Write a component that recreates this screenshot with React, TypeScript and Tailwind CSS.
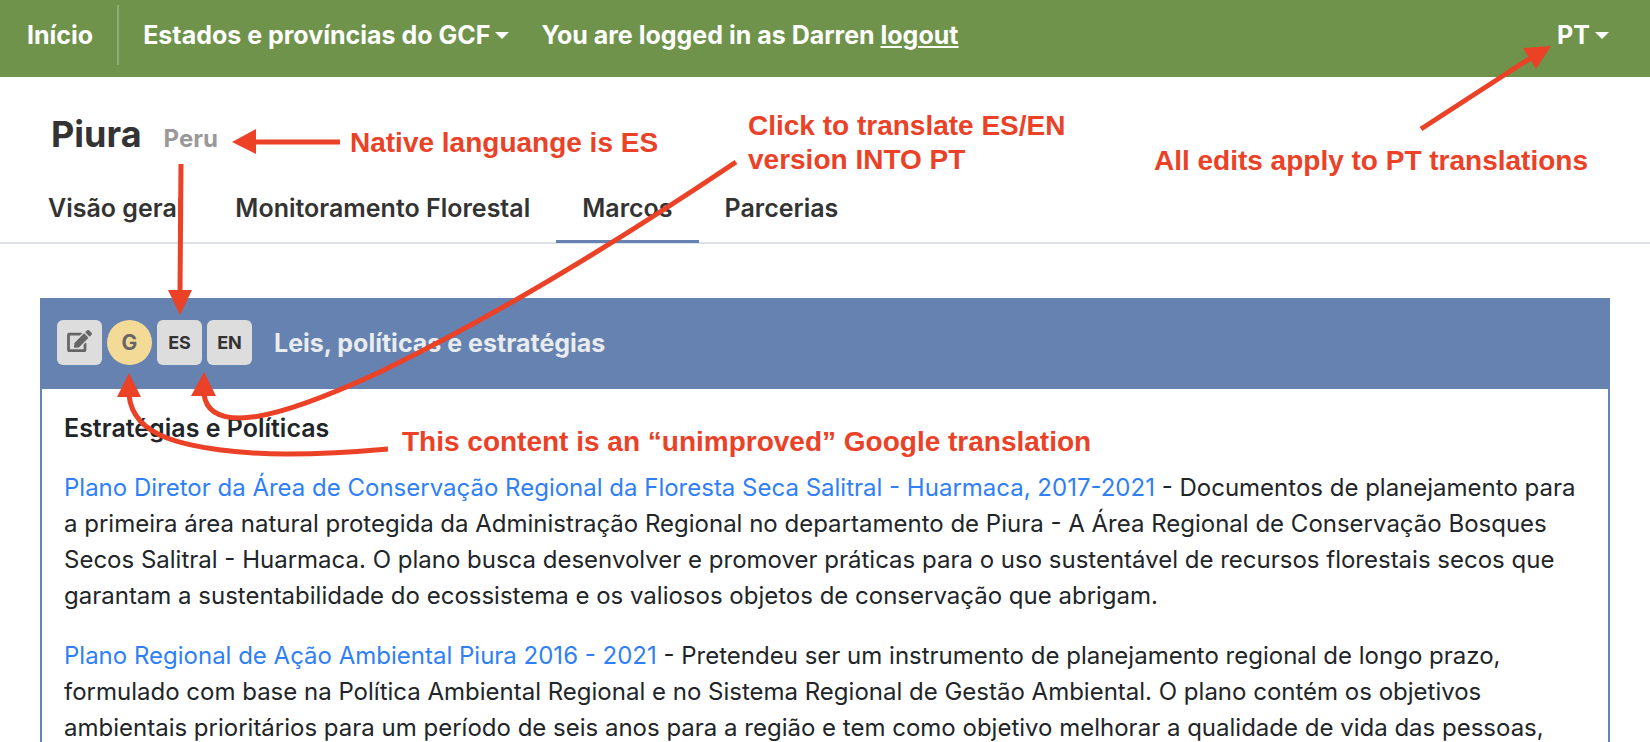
import type { ReactNode } from "react";
import { FaEdit } from "react-icons/fa";

const tabs = [
  { label: "Visão geral", active: false },
  { label: "Monitoramento Florestal", active: false },
  { label: "Marcos", active: true },
  { label: "Parcerias", active: false },
];

const policies = [
  {
    title: "Plano Diretor da Área de Conservação Regional da Floresta Seca Salitral - Huarmaca, 2017-2021",
    text: "Documentos de planejamento para a primeira área natural protegida da Administração Regional no departamento de Piura - A Área Regional de Conservação Bosques Secos Salitral - Huarmaca. O plano busca desenvolver e promover práticas para o uso sustentável de recursos florestais secos que garantam a sustentabilidade do ecossistema e os valiosos objetos de conservação que abrigam.",
  },
  {
    title: "Plano Regional de Ação Ambiental Piura 2016 - 2021",
    text: "Pretendeu ser um instrumento de planejamento regional de longo prazo, formulado com base na Política Ambiental Regional e no Sistema Regional de Gestão Ambiental. O plano contém os objetivos ambientais prioritários para um período de seis anos para a região e tem como objetivo melhorar a qualidade de vida das pessoas,",
  },
];

function Caret() {
  return (
    <svg className="h-[7px] w-[14px]" viewBox="0 0 14 7" fill="currentColor" aria-hidden="true">
      <path d="M0 0H14L7 7Z" />
    </svg>
  );
}

function TopBar() {
  return (
    <nav className="flex h-[77px] items-start bg-[#6f934b] pt-[5px] pr-[41px] text-[25px] leading-[60px] font-bold text-white">
      <a href="#inicio" className="border-r-2 border-[#8faa73] pr-6 pl-[27px]">
        Início
      </a>
      <button type="button" className="ml-6 flex items-center gap-[5px] font-bold">
        Estados e províncias do GCF
        <Caret />
      </button>
      <p className="ml-8">
        You are logged in as Darren{" "}
        <a href="#logout" className="underline decoration-2 underline-offset-2">
          logout
        </a>
      </p>
      <button type="button" className="ml-auto flex items-center gap-[5px] font-bold">
        PT
        <Caret />
      </button>
    </nav>
  );
}

function RegionHeader() {
  return (
    <header className="border-b-2 border-[#dee2e6] pt-[31px] text-[#333]">
      <div className="flex items-baseline gap-[22px] pl-[51px]">
        <h1 className="text-[36px] leading-[52px] font-bold">Piura</h1>
        <span className="text-[24px] font-bold text-[#999]">Peru</span>
      </div>
      <div className="-mb-px flex pt-[22px] pl-[22px]">
        {tabs.map((tab) => (
          <a
            key={tab.label}
            href={`#${tab.label}`}
            className={
              tab.active
                ? "border-b-[3px] border-[#6582b0] px-[26px] pt-2 pb-[14px] text-[25px] leading-9 font-semibold"
                : "border-b-[3px] border-transparent px-[26px] pt-2 pb-[14px] text-[25px] leading-9 font-semibold"
            }
          >
            {tab.label}
          </a>
        ))}
      </div>
    </header>
  );
}

function LanguageButton({ children }: { children: ReactNode }) {
  return (
    <button
      type="button"
      className="flex size-[45px] items-center justify-center rounded-[6px] bg-[#ddd] text-[18px] font-bold text-[#333]"
    >
      {children}
    </button>
  );
}

function PolicyPanel() {
  return (
    <section className="mx-10 mt-[54px] border-2 border-[#6582b0] text-[24px] leading-9">
      <div className="flex h-[89px] items-center gap-[5px] bg-[#6582b0] pb-1 pl-[15px]">
        <button
          type="button"
          aria-label="Editar"
          className="flex size-[45px] items-center justify-center rounded-[6px] bg-[#ddd] pb-1 text-[#666]"
        >
          <FaEdit className="h-[22px] w-[25px]" />
        </button>
        <span className="flex size-[45px] items-center justify-center rounded-full bg-[#f4da97] text-[21px] font-bold text-[#666]">
          G
        </span>
        <LanguageButton>ES</LanguageButton>
        <LanguageButton>EN</LanguageButton>
        <h2 className="ml-[17px] text-[25px] font-bold text-[#e9ecef]">Leis, políticas e estratégias</h2>
      </div>
      <div className="px-[22px] pt-[21px] pb-6 text-[#212529]">
        <h3 className="text-[25px] font-semibold">Estratégias e Políticas</h3>
        {policies.map((policy) => (
          <p key={policy.title} className="mt-6">
            <a href="#plano" className="text-[#2f7ff7]">
              {policy.title}
            </a>{" "}
            - {policy.text}
          </p>
        ))}
      </div>
    </section>
  );
}

/* Red notes and arrows that lie over the page. */
function Annotations() {
  return (
    <div className="pointer-events-none absolute inset-0 font-['Liberation_Sans',Arial,sans-serif] text-[28px] leading-[34px] font-bold text-[#eb4127]">
      <svg
        className="absolute top-0 left-0 h-[480px] w-[760px]"
        viewBox="0 0 760 480"
        fill="none"
        stroke="currentColor"
        strokeWidth="5"
        aria-hidden="true"
      >
        <path d="M340 142H254" />
        <path d="M181 164L180 292" />
        <path d="M204 394C206 412 220 418 240 418C272 418 326 397 380 372C500 314 620 240 736 162" />
        <path d="M129 395C131 416 146 430 167 438C193 448 240 454 287 454C320 454 355 452 388 449" />
        <g fill="currentColor" stroke="none">
          <path d="M232 142L256 129V154Z" />
          <path d="M180 315L168 290H192Z" />
          <path d="M204 372L191 396H216Z" />
          <path d="M129 373L117 397H141Z" />
        </g>
      </svg>
      <svg
        className="absolute top-0 right-0 h-[140px] w-[250px]"
        viewBox="0 0 250 140"
        fill="none"
        stroke="currentColor"
        strokeWidth="5"
        aria-hidden="true"
      >
        <path d="M21 129L132 57" />
        <path d="M151 46L123 48L136 69Z" fill="currentColor" stroke="none" />
      </svg>
      <p className="absolute top-[126px] left-[350px] whitespace-nowrap">Native languange is ES</p>
      <p className="absolute top-[109px] left-[748px] whitespace-nowrap">
        Click to translate ES/EN
        <br />
        version INTO PT
      </p>
      <p className="absolute top-[144px] right-[62px] whitespace-nowrap">All edits apply to PT translations</p>
      <p className="absolute top-[425px] left-[402px] whitespace-nowrap">
        This content is an “unimproved” Google translation
      </p>
    </div>
  );
}

export default function App() {
  return (
    <div className="relative h-screen overflow-hidden bg-white font-['Inter',sans-serif]">
      <TopBar />
      <RegionHeader />
      <main>
        <PolicyPanel />
      </main>
      <Annotations />
    </div>
  );
}
